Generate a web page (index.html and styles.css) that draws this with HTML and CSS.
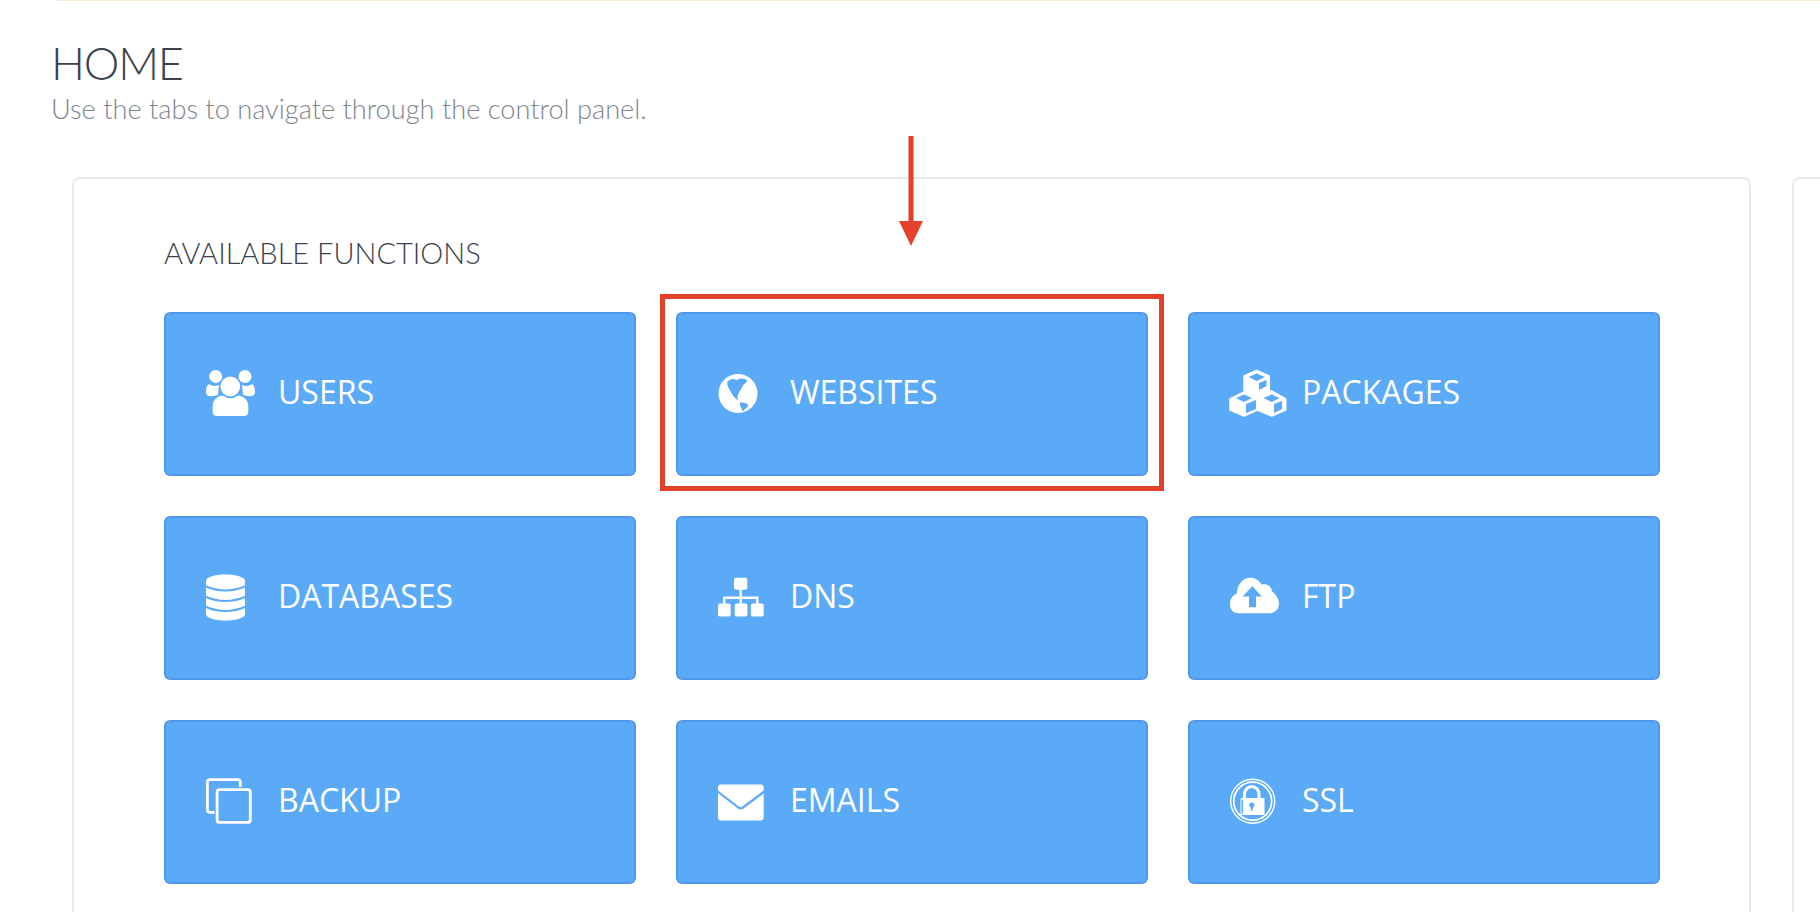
FILE: index.html
```html
<!DOCTYPE html>
<html lang="en">
<head>
    <meta charset="UTF-8">
    <meta name="viewport" content="width=device-width, initial-scale=1.0">
    <title>Control Panel</title>
    <link rel="stylesheet" href="styles.css">
</head>
<body>
    <div class="top-line"></div>

    <!-- Page heading -->
    <div class="page-head">
        <h1>HOME</h1>
        <p>Use the tabs to navigate through the control panel.</p>
    </div>

    <div class="panels">
        <div class="panel">
            <h2>AVAILABLE FUNCTIONS</h2>
            <div class="tile-grid">
                <a class="tile">
                    <svg class="tile-icon" viewBox="0 0 56 50">
                        <circle cx="9.7" cy="8.5" r="6.5" fill="#fff"/>
                        <circle cx="39" cy="8.5" r="6.5" fill="#fff"/>
                        <path d="M3 16Q7 19.5 13 17L12 27Q8 28.5 3 28Q0 27 0 24C0 20 1 17 3 16Z" fill="#fff"/>
                        <path d="M46 16Q42 19.5 36 17L37 27Q41 28.5 46 28Q49 27 49 24C49 20 48 17 46 16Z" fill="#fff"/>
                        <circle cx="24.3" cy="18.5" r="10.5" fill="#fff" stroke="#5aaaf8" stroke-width="1.2"/>
                        <path d="M6.7 44V38C6.7 31 13 27.5 17 27.5Q24.5 33 32 27.5C36 27.5 42.3 31 42.3 38V44Q42.3 48 38 48H11Q6.7 48 6.7 44Z" fill="#fff"/>
                    </svg>
                    <span>USERS</span>
                </a>
                <a class="tile tile-marked">
                    <svg class="tile-icon" viewBox="0 0 56 50">
                        <circle cx="20" cy="25.5" r="19.5" fill="#fff"/>
                        <g transform="translate(-8 -2.5) scale(.3333)" fill="#5aaaf8">
                            <path d="M52 48C60 40 72 38 80 44C90 36 104 38 112 46C108 54 100 56 98 62C94 72 88 76 86 84C82 90 80 96 86 104C78 102 68 92 62 78C56 68 50 58 52 48Z"/>
                            <path d="M90 112C98 110 106 112 114 118C116 124 110 128 106 130C102 136 98 138 96 134C94 126 88 120 90 112Z"/>
                        </g>
                    </svg>
                    <span>WEBSITES</span>
                    <svg class="mark-arrow" viewBox="0 0 26 110">
                        <path d="M10.5 0H15.5V85H25L13 110L1 85H10.5Z" fill="#e4412a"/>
                    </svg>
                </a>
                <a class="tile">
                    <svg class="tile-icon" viewBox="0 0 56 50">
                        <path d="M26.7 2.5L39.3 8V23L41.7 23L55.7 30.8V42L41.7 48L27.5 42L14 48L0 42V30.8L14 24V8Z" fill="#fff" stroke="#fff" stroke-width="1.5" stroke-linejoin="round"/>
                        <g fill="#5aaaf8">
                            <path d="M26.7 5.5L35 9L26.7 13L18.5 9Z"/>
                            <path d="M14 26.5L22 30L14 34L6 30Z"/>
                            <path d="M41.7 26.5L49.5 30L41.7 34L33.5 30Z"/>
                            <path d="M16 36L26 32V41L16 45Z"/>
                            <path d="M44 36L52 33V41L44 45Z"/>
                            <path d="M29 15L36.5 12V18L29 22Z"/>
                        </g>
                    </svg>
                    <span>PACKAGES</span>
                </a>

                <a class="tile">
                    <svg class="tile-icon" viewBox="0 0 56 50">
                        <path d="M0 9C0 5 9 2.5 19.5 2.5S39 5 39 9V42C39 46 30 48.5 19.5 48.5S0 46 0 42Z" fill="#fff"/>
                        <g fill="none" stroke="#5aaaf8" stroke-width="2">
                            <path d="M-1 14Q19.5 23 40 14"/>
                            <path d="M-1 24.5Q19.5 33.5 40 24.5"/>
                            <path d="M-1 34.5Q19.5 43.5 40 34.5"/>
                        </g>
                    </svg>
                    <span>DATABASES</span>
                </a>
                <a class="tile">
                    <svg class="tile-icon" viewBox="0 0 56 50">
                        <g fill="#fff">
                            <rect x="16" y="5.8" width="13.3" height="12" rx="2"/>
                            <rect x="0" y="31.5" width="12.7" height="13" rx="2"/>
                            <rect x="16.7" y="31.5" width="12.7" height="13" rx="2"/>
                            <rect x="32.8" y="31.5" width="12.9" height="13" rx="2"/>
                        </g>
                        <path d="M22.7 17V32M6.3 32V25.8H39.3V32" fill="none" stroke="#fff" stroke-width="2.4"/>
                    </svg>
                    <span>DNS</span>
                </a>
                <a class="tile">
                    <svg class="tile-icon" viewBox="0 0 56 50">
                        <g transform="translate(-30 -51.5) scale(.3333)">
                            <path d="M115 278C95 278 90 262 90 250C90 232 102 222 110 220C112 190 130 172 150 172C165 172 178 180 185 192C192 190 212 190 216 212C225 220 237 232 237 250C237 265 225 278 210 278Z" fill="#fff"/>
                            <path d="M157 197L186 228H168V260H147V228H128Z" fill="#5aaaf8"/>
                        </g>
                    </svg>
                    <span>FTP</span>
                </a>

                <a class="tile">
                    <svg class="tile-icon" viewBox="0 0 56 50">
                        <g fill="none" stroke="#fff" stroke-width="2.8">
                            <rect x="11.1" y="13.6" width="33.2" height="32.8" rx="2.5"/>
                            <path d="M8.5 36.4H3.7Q1.4 36.4 1.4 34V6Q1.4 3.6 3.7 3.6H32Q34.3 3.6 34.3 6V11"/>
                        </g>
                    </svg>
                    <span>BACKUP</span>
                </a>
                <a class="tile">
                    <svg class="tile-icon" viewBox="0 0 56 50">
                        <rect x="0" y="8.5" width="45.7" height="36" rx="3" fill="#fff"/>
                        <path d="M-1 15L20.5 31.5Q22.8 33 25 31.5L47 15" fill="none" stroke="#5aaaf8" stroke-width="2.2"/>
                    </svg>
                    <span>EMAILS</span>
                </a>
                <a class="tile">
                    <svg class="tile-icon" viewBox="0 0 56 50">
                        <circle cx="22.7" cy="25.2" r="22" fill="none" stroke="#fff" stroke-width="1.4"/>
                        <circle cx="22.7" cy="25.2" r="19" fill="none" stroke="#fff" stroke-width="1.8"/>
                        <path d="M14.5 24V18.5C14.5 13.5 18 10.5 21.8 10.5S29 13.5 29 18.5V24" fill="none" stroke="#fff" stroke-width="3"/>
                        <rect x="10.5" y="22" width="24" height="17" rx="1" fill="#fff"/>
                        <path d="M11.5 23.5H13V37.5H11.5Z" fill="#5aaaf8"/>
                        <circle cx="21.8" cy="29" r="2.6" fill="#5aaaf8"/>
                        <path d="M20.8 30H22.8V34.5H20.8Z" fill="#5aaaf8"/>
                    </svg>
                    <span>SSL</span>
                </a>
            </div>
        </div>
        <div class="panel panel-next"></div>
    </div>
</body>
</html>
```

FILE: styles.css
```css
/* General Styling */
html, body {
    margin: 0;
    padding: 0;
    height: 100%;
    overflow: hidden;
    background: #fff;
}

body {
    font-family: "Lato", "Open Sans", sans-serif;
    color: #3b424d;
}

.top-line {
    height: 1px;
    margin-left: 56px;
    background: #f9ead8;
}

/* Page heading */
.page-head {
    padding: 37px 0 0 51px;
}

.page-head h1 {
    margin: 0;
    font-size: 45px;
    line-height: 50px;
    font-weight: 300;
    letter-spacing: -1.2px;
}

.page-head p {
    margin: 5px 0 0;
    font-size: 27.2px;
    line-height: 32px;
    font-weight: 300;
    color: #80858c;
}

/* Panels */
.panels {
    display: flex;
    gap: 41px;
    margin-top: 52px;
    padding-left: 72px;
}

.panel {
    flex: none;
    box-sizing: border-box;
    width: 1679px;
    height: 900px;
    padding: 58px 0 0 90px;
    border: 2px solid #e6e9ed;
    border-radius: 8px;
}

.panel-next {
    width: 200px;
    padding: 0;
}

.panel h2 {
    margin: 0;
    font-size: 29px;
    line-height: 32px;
    font-weight: 300;
}

/* Function tiles */
.tile-grid {
    display: grid;
    grid-template-columns: repeat(3, 472px);
    grid-auto-rows: 164px;
    gap: 40px;
    margin-top: 43px;
}

.tile {
    position: relative;
    display: flex;
    align-items: center;
    box-sizing: border-box;
    padding: 0 0 3px 40px;
    background: #5aaaf8;
    border: 2px solid #5096ea;
    border-radius: 6px;
    color: #fff;
    font-family: "Open Sans", sans-serif;
    font-size: 32px;
}

.tile span {
    margin-bottom: 2px;
}

.tile-icon {
    flex: none;
    width: 56px;
    height: 50px;
    margin-right: 16px;
    overflow: visible;
}

/* Red annotation over the websites tile */
.tile-marked::after {
    content: "";
    position: absolute;
    inset: -20px -18px -17px;
    border: 5px solid #e4412a;
}

.mark-arrow {
    position: absolute;
    left: 220px;
    top: -178px;
    width: 26px;
    height: 110px;
}
```
